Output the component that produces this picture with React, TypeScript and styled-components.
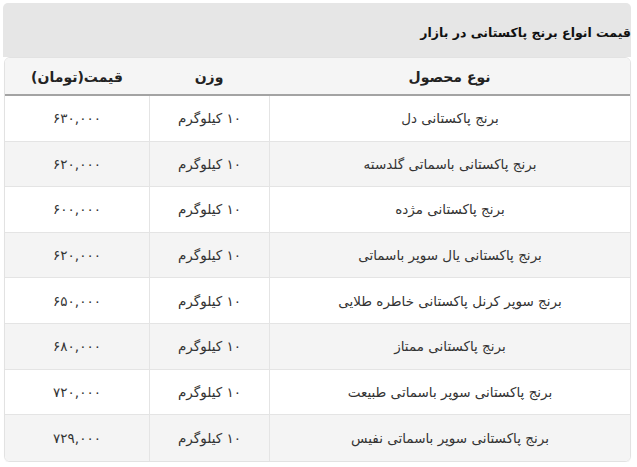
import styled, { createGlobalStyle } from "styled-components";

const GlobalStyle = createGlobalStyle`
  body {
    margin: 0;
    background: #ffffff;
    font-family: "DejaVu Sans", "Noto Sans", sans-serif;
  }
`

const Wrapper = styled.div`
  width: 628px;
  margin: 3px 0 0 3px;
  direction: rtl;
`

const Caption = styled.div`
  height: 54px;
  background: #e6e6e6;
  border-radius: 5px 5px 0 0;
  display: flex;
  align-items: center;
  padding-top: 4px;
  box-sizing: border-box;
  font-size: 12.5px;
  font-weight: bold;
  color: #111;
`

const Table = styled.div`
  margin-left: 1px;
  border: 1px solid #e2e2e2;
  border-radius: 6px;
  overflow: hidden;
  box-shadow: 0 1px 1px rgba(0, 0, 0, 0.05);
`

const Row = styled.div<{ $alt?: boolean; $head?: boolean }>`
  display: grid;
  grid-template-columns: 361px 120px 1fr;
  box-sizing: border-box;
  height: ${(p) => (p.$head ? "38px" : "45.6px")};
  background: ${(p) => (p.$head ? "#f5f5f5" : p.$alt ? "#f4f4f4" : "#ffffff")};
  border-bottom: ${(p) => (p.$head ? "2px solid #a3a3a3" : "1px solid #e4e4e4")};
  &:last-child {
    border-bottom: none;
  }
`

const Cell = styled.div<{ $head?: boolean }>`
  display: flex;
  align-items: center;
  justify-content: center;
  font-size: ${(p) => (p.$head ? "14px" : "13.5px")};
  font-weight: ${(p) => (p.$head ? "bold" : "normal")};
  color: ${(p) => (p.$head ? "#222" : "#333")};
  border-left: ${(p) => (p.$head ? "none" : "1px solid #e4e4e4")};
  padding-top: ${(p) => (p.$head ? "2px" : "0")};
  &:last-child {
    border-left: none;
  }
`

const rows = [
  ["برنج پاکستانی دل", "۱۰ کیلوگرم", "۶۳۰,۰۰۰"],
  ["برنج پاکستانی باسماتی گلدسته", "۱۰ کیلوگرم", "۶۲۰,۰۰۰"],
  ["برنج پاکستانی مژده", "۱۰ کیلوگرم", "۶۰۰,۰۰۰"],
  ["برنج پاکستانی یال سوپر باسماتی", "۱۰ کیلوگرم", "۶۲۰,۰۰۰"],
  ["برنج سوپر کرنل پاکستانی خاطره طلایی", "۱۰ کیلوگرم", "۶۵۰,۰۰۰"],
  ["برنج پاکستانی ممتاز", "۱۰ کیلوگرم", "۶۸۰,۰۰۰"],
  ["برنج پاکستانی سوپر باسماتی طبیعت", "۱۰ کیلوگرم", "۷۲۰,۰۰۰"],
  ["برنج پاکستانی سوپر باسماتی نفیس", "۱۰ کیلوگرم", "۷۲۹,۰۰۰"],
]

const App = () => {
  return (
    <>
      <GlobalStyle />
      <Wrapper>
        <Caption>قیمت انواع برنج پاکستانی در بازار</Caption>
        <Table>
          <Row $head>
            <Cell $head>نوع محصول</Cell>
            <Cell $head>وزن</Cell>
            <Cell $head>قیمت(تومان)</Cell>
          </Row>
          {rows.map((r, i) => (
            <Row key={i} $alt={i % 2 === 1}>
              <Cell>{r[0]}</Cell>
              <Cell>{r[1]}</Cell>
              <Cell>{r[2]}</Cell>
            </Row>
          ))}
        </Table>
      </Wrapper>
    </>
  )
}

export default App
